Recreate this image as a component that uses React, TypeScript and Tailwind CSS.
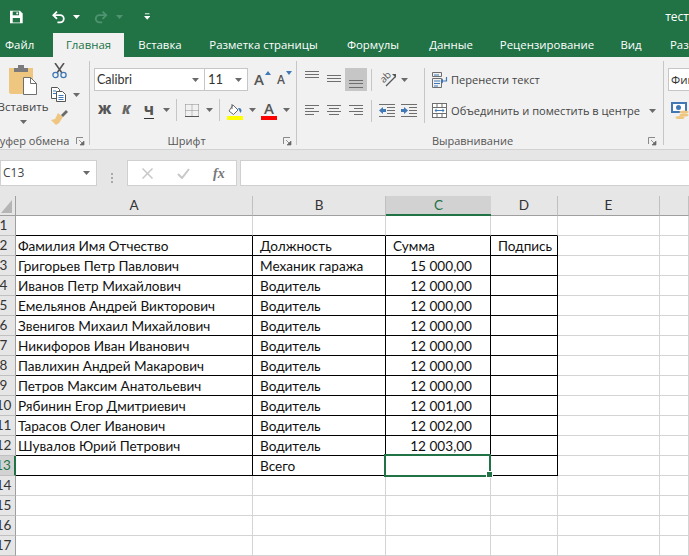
const ui = "font-['Open_Sans',sans-serif]";
const cellFont = "font-['Lato','Noto_Sans',sans-serif]";

function Caret() {
  return (
    <svg width="7" height="4" viewBox="0 0 7 4" className="shrink-0">
      <path d="M0 0h7L3.500 4z" fill="#6a6a6a" />
    </svg>
  );
}

function TitleCaret({ dim = false }: { dim?: boolean }) {
  return (
    <svg width="7" height="4" viewBox="0 0 7 4" className="shrink-0">
      <path d="M0 0h7L3.500 4z" fill={dim ? "#4f9470" : "#fff"} />
    </svg>
  );
}

function Launcher() {
  return (
    <svg width="9" height="9" viewBox="0 0 9 9" className="shrink-0">
      <path d="M0.500 7V0.500H7" fill="none" stroke="#8a8a8a" />
      <path d="M3 3l4 4M8 4v4H4z" fill="#6a6a6a" stroke="#6a6a6a" strokeWidth="0.7" />
    </svg>
  );
}

function Lines({ rows }: { rows: [number, number, number][] }) {
  return (
    <svg width="22" height="23" viewBox="0 0 22 23">
      {rows.map(([x1, x2, y]) => (
        <rect key={`${x1}-${y}`} x={x1} y={y} width={x2 - x1} height="1" fill="#6e6e6e" />
      ))}
    </svg>
  );
}

function Paste() {
  return (
    <svg width="28" height="31" viewBox="0 0 28 31">
      <path d="M0 4h24v26H1.500L0 28.500z" fill="#efc67f" />
      <path d="M5 4h4V1h6v3h4v4H5z" fill="#7b7b7b" />
      <path d="M14.500 13.500h7l6 6v11h-13z" fill="#fff" stroke="#6f6f6f" />
      <path d="M21.500 13.500v6h6" fill="none" stroke="#6f6f6f" />
    </svg>
  );
}

function Cut() {
  return (
    <svg width="15" height="16" viewBox="0 0 15 16">
      <path d="M3 0l7 10M12 0L5 10" stroke="#555" strokeWidth="1.600" fill="none" />
      <circle cx="3.500" cy="12" r="2.600" fill="none" stroke="#3f78b5" strokeWidth="1.300" />
      <circle cx="11.500" cy="12" r="2.600" fill="none" stroke="#3f78b5" strokeWidth="1.300" />
    </svg>
  );
}

function Copy() {
  return (
    <svg width="15" height="15" viewBox="0 0 15 15">
      <path d="M.500.500h6l2 2v9h-8z" fill="#fff" stroke="#555" />
      <path d="M5.500 4.500h6l3 3v7h-9z" fill="#fff" stroke="#555" />
      <path d="M2 4h3M2 6.500h3M7.500 8.500h5M7.500 10.500h5M7.500 12.500h5" stroke="#3f78b5" />
    </svg>
  );
}

function Painter() {
  return (
    <svg width="17" height="15" viewBox="0 0 17 15">
      <path d="M7 3l5 4-4 6-3 2-5-5 4-1z" fill="#efc67f" />
      <path d="M10 5l5-5 2 2-5 5z" fill="#6a6a6a" />
    </svg>
  );
}

function Borders() {
  return (
    <svg width="14" height="13" viewBox="0 0 14 13">
      <path d="M.500.500h13M.500 6.500h13M.500.500v12M7 .500v12M13.500.500v12" stroke="#8a8a8a" strokeDasharray="1 1" fill="none" />
      <rect x="0" y="12" width="14" height="1" fill="#555" />
    </svg>
  );
}

function Fill() {
  return (
    <svg width="16" height="16" viewBox="0 0 16 16">
      <path d="M6 1l5 5-4.500 4.500L2 7z" fill="#fff" stroke="#6a6a6a" />
      <path d="M5 0v5" stroke="#6a6a6a" />
      <path d="M11 4c2-.5 3.500.5 3.500 3l-1 2-1-2z" fill="#3f78b5" />
      <rect x="0" y="12" width="16" height="4" fill="#ffff00" />
    </svg>
  );
}

function Orientation() {
  return (
    <svg width="17" height="17" viewBox="0 0 17 17">
      <text x="5.500" y="9" transform="rotate(-45 6 6)" textAnchor="middle" fontSize="10" fill="#555" fontFamily="Open Sans, sans-serif">ab</text>
      <path d="M6 15L15 6" stroke="#555" strokeWidth="1.200" />
      <path d="M12 3h4v4z" fill="#555" />
    </svg>
  );
}

function Indent({ flip = false }: { flip?: boolean }) {
  return (
    <svg width="16" height="13" viewBox="0 0 16 13">
      <path d="M0 .500h16M8 3.500h8M8 6.500h8M8 9.500h8M0 12.500h16" stroke="#6e6e6e" />
      {flip ? (
        <path d="M0 5h3V3l4 3.500-4 3.500V8H0z" fill="#3f78b5" />
      ) : (
        <path d="M7 5H4V3L0 6.500 4 10V8h3z" fill="#3f78b5" />
      )}
    </svg>
  );
}

function Wrap() {
  return (
    <svg width="16" height="16" viewBox="0 0 16 16">
      <path d="M.500.500h9v4h-9zM.500 6.500h9v9h-9z" fill="none" stroke="#6e6e6e" />
      <path d="M2 3h5M2 9h6M2 11.500h6M2 14h4" stroke="#3f78b5" />
      <path d="M14.500 5v4h-4" fill="none" stroke="#3f78b5" strokeWidth="1.200" />
      <path d="M11 6.500v5L8.500 9z" fill="#3f78b5" />
    </svg>
  );
}

function Merge() {
  return (
    <svg width="15" height="15" viewBox="0 0 15 15">
      <rect x=".5" y=".5" width="14" height="14" fill="#fff" stroke="#6e6e6e" />
      <path d="M.500 4.500h14M.500 10.500h14M5 .500v4M10 .500v4M5 10.500v4M10 10.500v4" stroke="#6e6e6e" />
      <path d="M3 7.500h9" stroke="#3f78b5" />
      <path d="M4.500 5.500v4L2.500 7.500zM10.500 5.500v4l2-2z" fill="#3f78b5" />
    </svg>
  );
}

function Currency() {
  return (
    <svg width="18" height="17" viewBox="0 0 18 17">
      <rect x="1" y="1" width="14" height="9" fill="#fff" stroke="#3f78b5" strokeWidth="2" />
      <circle cx="7.500" cy="5.500" r="2.500" fill="#3f78b5" />
      <ellipse cx="13" cy="10" rx="4.500" ry="1.500" fill="#efc67f" />
      <ellipse cx="13" cy="13" rx="4.500" ry="1.500" fill="#efc67f" />
      <ellipse cx="9" cy="15.500" rx="4.500" ry="1.500" fill="#efc67f" />
    </svg>
  );
}

function ClipboardGroup() {
  return (
    <div className="flex flex-col w-[89px] shrink-0">
      <div className="flex h-[76px]">
        <div className="flex flex-col items-center w-[46px] pt-[7px]">
          <Paste />
          <span className="text-[11.500px] leading-[16px] mt-[4px] text-[#444]">Вставить</span>
          <span className="mt-[5px]"><Caret /></span>
        </div>
        <div className="flex flex-col pl-[5px] pt-[6px]">
          <div className="h-[23px] pl-px"><Cut /></div>
          <div className="h-[24px] flex items-start gap-[7px] pt-[1px]">
            <Copy />
            <span className="mt-[6px]"><Caret /></span>
          </div>
          <div><Painter /></div>
        </div>
      </div>
      <div className="flex items-center justify-between h-[16px] pr-[4px]">
        <span className="text-[11px] text-[#555] -ml-[7px] whitespace-nowrap">Буфер обмена</span>
        <Launcher />
      </div>
    </div>
  );
}

function FontGroup() {
  return (
    <div className="flex flex-col w-[206px] shrink-0">
      <div className="flex flex-col h-[76px] pt-[11px] pl-[4px]">
        <div className="flex items-center h-[23px]">
          <div className="flex items-center justify-between w-[111px] h-full bg-white border border-[#c6c6c6] pl-[2px] pr-[5px]">
            <span className={`${cellFont} text-[12.500px] text-[#333] pt-px`}>Calibri</span>
            <Caret />
          </div>
          <div className="flex items-center justify-between w-[44px] -ml-px h-full bg-white border border-[#c6c6c6] pl-[3px] pr-[5px]">
            <span className={`${cellFont} text-[13px] text-[#333] pt-px`}>11</span>
            <Caret />
          </div>
          <div className="relative ml-[6px] w-[14px] text-[15px] font-semibold leading-none text-[#555]">
            A
            <svg width="6" height="4" viewBox="0 0 6 4" className="absolute right-[-3px] top-[-1px]">
              <path d="M0 4l3-4 3 4z" fill="#3f78b5" />
            </svg>
          </div>
          <div className="relative ml-[9px] w-[12px] text-[12px] font-semibold leading-none text-[#555]">
            A
            <svg width="6" height="4" viewBox="0 0 6 4" className="absolute right-[-3px] top-[-3px]">
              <path d="M0 0l3 4 3-4z" fill="#3f78b5" />
            </svg>
          </div>
        </div>
        <div className="flex items-center h-[24px] mt-[7px] text-[#555]">
          <span className="ml-[4px] w-[24px] text-[13px] font-extrabold">Ж</span>
          <span className="w-[22px] text-[13px] font-extrabold italic text-[#666]">К</span>
          <span className="w-[10px] text-[13px] font-extrabold border-b border-[#333] leading-[16px]">Ч</span>
          <span className="ml-[9px]"><Caret /></span>
          <span className="ml-[6px] w-px h-[22px] bg-[#c6c6c6]" />
          <span className="ml-[8px]"><Borders /></span>
          <span className="ml-[7px]"><Caret /></span>
          <span className="ml-[6px] w-px h-[22px] bg-[#c6c6c6]" />
          <span className="ml-[7px] pt-[3px]"><Fill /></span>
          <span className="ml-[6px]"><Caret /></span>
          <div className="ml-[5px] flex flex-col items-center w-[16px]">
            <span className="text-[15px] leading-[15px] font-semibold">A</span>
            <span className="w-[16px] h-[4px] bg-[#ff0000]" />
          </div>
          <span className="ml-[6px]"><Caret /></span>
        </div>
      </div>
      <div className="flex items-center h-[16px] pr-[4px]">
        <span className="flex-1 text-center text-[11px] text-[#555]">Шрифт</span>
        <Launcher />
      </div>
    </div>
  );
}

function AlignGroup() {
  return (
    <div className="flex flex-col w-[366px] shrink-0">
      <div className="flex h-[76px] pt-[11px] pl-[4px]">
        <div className="flex flex-col">
          <div className="flex h-[23px]">
            <Lines rows={[[4, 18, 3], [4, 18, 6], [4, 18, 9]]} />
            <Lines rows={[[4, 18, 7], [4, 18, 10], [4, 18, 13]]} />
            <div className="bg-[#c6c6c6]">
              <Lines rows={[[4, 18, 12], [4, 18, 15], [4, 18, 19]]} />
            </div>
          </div>
          <div className="flex h-[23px] mt-[8px]">
            <Lines rows={[[4, 18, 6], [4, 13, 9], [4, 18, 12], [4, 13, 15]]} />
            <Lines rows={[[4, 18, 6], [6, 16, 9], [4, 18, 12], [6, 16, 15]]} />
            <Lines rows={[[4, 18, 6], [9, 18, 9], [4, 18, 12], [9, 18, 15]]} />
          </div>
        </div>
        <div className="flex flex-col ml-[4px] w-[46px]">
          <div className="flex items-center h-[23px]">
            <span className="w-px h-[22px] bg-[#c6c6c6]" />
            <span className="ml-[8px]"><Orientation /></span>
            <span className="ml-[4px]"><Caret /></span>
          </div>
          <div className="flex items-center h-[23px] mt-[8px]">
            <span className="w-px h-[22px] bg-[#c6c6c6]" />
            <span className="ml-[7px]"><Indent /></span>
            <span className="ml-[6px]"><Indent flip /></span>
          </div>
        </div>
        <span className="ml-[7px] w-px h-[55px] bg-[#c6c6c6]" />
        <div className="flex flex-col ml-[7px] text-[11.100px] text-[#444]">
          <div className="flex items-center gap-[3px] h-[23px]">
            <Wrap />
            <span className="whitespace-nowrap pt-px">Перенести текст</span>
          </div>
          <div className="flex items-center gap-[4px] h-[23px] mt-[8px]">
            <Merge />
            <span className="whitespace-nowrap pt-px">Объединить и поместить в центре</span>
            <span className="ml-[5px]"><Caret /></span>
          </div>
        </div>
      </div>
      <div className="flex items-center h-[16px] pr-[4px]">
        <span className="w-[351px] text-center text-[11px] text-[#555]">Выравнивание</span>
        <Launcher />
      </div>
    </div>
  );
}

function NumberGroup() {
  return (
    <div className="flex flex-col pt-[11px] pl-[4px] flex-1">
      <div className="flex items-center h-[23px] bg-white border border-r-0 border-[#c6c6c6] pl-[2px] text-[11.500px] text-[#333] overflow-hidden whitespace-nowrap">
        Финансовый
      </div>
      <div className="mt-[11px] pl-[3px]"><Currency /></div>
    </div>
  );
}

function Separator() {
  return <div className="w-px h-[84px] mt-[4px] bg-[#c6c6c6] shrink-0" />;
}

function Ribbon() {
  return (
    <div className="flex h-[93px] bg-[#f1f1f1] border-b border-[#d2d2d2]">
      <ClipboardGroup />
      <Separator />
      <FontGroup />
      <Separator />
      <AlignGroup />
      <Separator />
      <NumberGroup />
    </div>
  );
}

const tabs: [string, string][] = [
  ["Вставка", "w-[72px]"],
  ["Разметка страницы", "w-[135px]"],
  ["Формулы", "w-[84px]"],
  ["Данные", "w-[72px]"],
  ["Рецензирование", "w-[120px]"],
  ["Вид", "w-[48px]"],
];

function TitleBar() {
  return (
    <div className="bg-[#217346] text-white">
      <div className="flex items-center h-[33px]">
        <svg width="14" height="14" viewBox="0 0 14 14" className="ml-[10px]">
          <path d="M0 0h11l3 3v11H0z" fill="#fff" />
          <path d="M3 1h7v4H3zM3 8h8v5H3z" fill="#217346" />
          <rect x="7" y="2" width="2" height="2" fill="#fff" />
        </svg>
        <svg width="15" height="14" viewBox="0 0 15 14" className="ml-[29px]">
          <path d="M1.500 5H9a4 4 0 0 1 0 8H6" fill="none" stroke="#fff" strokeWidth="2" />
          <path d="M5.500 1l-4 4 4 4" fill="none" stroke="#fff" strokeWidth="2" />
        </svg>
        <span className="ml-[8px]"><TitleCaret /></span>
        <svg width="15" height="14" viewBox="0 0 15 14" className="ml-[14px]">
          <path d="M13.500 5H6a4 4 0 0 0 0 8h3" fill="none" stroke="#4f9470" strokeWidth="2" />
          <path d="M9.500 1l4 4-4 4" fill="none" stroke="#4f9470" strokeWidth="2" />
        </svg>
        <span className="ml-[8px]"><TitleCaret dim /></span>
        <svg width="7" height="7" viewBox="0 0 7 7" className="ml-[21px]">
          <path d="M1 .500h5" stroke="#fff" />
          <path d="M0 3h7L3.500 7z" fill="#fff" />
        </svg>
        <span className="ml-[515px] text-[12px] whitespace-nowrap">тест</span>
      </div>
      <div className="flex h-[24px] text-[11.400px] leading-[24px] whitespace-nowrap">
        <span className="w-[53px] shrink-0 pl-[5px]">Файл</span>
        <span className="w-[71px] shrink-0 text-center bg-[#f1f1f1] text-[#217346]">Главная</span>
        {tabs.map(([label, width]) => (
          <span key={label} className={`${width} shrink-0 text-center`}>{label}</span>
        ))}
        <span className="shrink-0 pl-[15px]">Разработчик</span>
      </div>
    </div>
  );
}

function FormulaBar() {
  return (
    <div className="flex h-[46px] pt-[10px] bg-[#e6e6e6]">
      <div className="flex items-center justify-between w-[97px] h-[26px] bg-white border border-[#d0d0d0] pl-[2px] pr-[6px]">
        <span className="text-[12px] text-[#444]">C13</span>
        <Caret />
      </div>
      <div className="flex flex-col justify-center gap-[2px] w-[30px] items-center">
        <span className="w-[2px] h-[2px] bg-[#aaa]" />
        <span className="w-[2px] h-[2px] bg-[#aaa]" />
        <span className="w-[2px] h-[2px] bg-[#aaa]" />
      </div>
      <div className="flex items-center w-[110px] h-[26px] bg-white border border-[#d0d0d0]">
        <svg width="11" height="11" viewBox="0 0 11 11" className="ml-[14px]">
          <path d="M.500.500l10 10M10.500.500l-10 10" stroke="#c8c8c8" strokeWidth="1.500" />
        </svg>
        <svg width="13" height="11" viewBox="0 0 13 11" className="ml-[24px]">
          <path d="M1 6l4 4 7-9" fill="none" stroke="#c8c8c8" strokeWidth="2" />
        </svg>
        <span className="ml-[23px] font-['Liberation_Serif',serif] italic font-bold text-[14px] text-[#777]">fx</span>
      </div>
      <div className="flex-1 ml-[3px] h-[26px] bg-white border-y border-l border-[#d0d0d0]" />
    </div>
  );
}

type Row = [string, string, string];

const people: Row[] = [
  ["Григорьев Петр Павлович", "Механик гаража", "15 000,00"],
  ["Иванов Петр Михайлович", "Водитель", "12 000,00"],
  ["Емельянов Андрей Викторович", "Водитель", "12 000,00"],
  ["Звенигов Михаил Михайлович", "Водитель", "12 000,00"],
  ["Никифоров Иван Иванович", "Водитель", "12 000,00"],
  ["Павлихин Андрей Макарович", "Водитель", "12 000,00"],
  ["Петров Максим Анатольевич", "Водитель", "12 000,00"],
  ["Рябинин Егор Дмитриевич", "Водитель", "12 001,00"],
  ["Тарасов Олег Иванович", "Водитель", "12 002,00"],
  ["Шувалов Юрий Петрович", "Водитель", "12 003,00"],
];

const grey = "border-r border-b border-[#d4d4d4]";
const boxed = "border-r border-b border-black";
const topRowCell = "border-r border-[#d4d4d4] border-b border-b-black";
const body = "flex items-center pt-px overflow-hidden whitespace-nowrap";

function RowHead({ n, active = false }: { n: number; active?: boolean }) {
  return (
    <div
      className={`flex items-center text-[13.500px] border-b ${
        active
          ? "bg-[#d2d2d2] text-[#217346] border-b-[#c0c0c0] border-r-2 border-r-[#217346]"
          : "bg-[#e6e6e6] text-[#333] border-b-[#c0c0c0] border-r border-r-[#9f9f9f]"
      }`}
    >
      <span className="-ml-[8px] w-[23px] text-center">{n}</span>
    </div>
  );
}

function ColHead({ label, active = false }: { label: string; active?: boolean }) {
  return (
    <div
      className={`flex items-center justify-center text-[13.500px] border-b ${
        active
          ? "bg-[#d2d2d2] text-[#217346] border-b-2 border-b-[#217346]"
          : "bg-[#e6e6e6] text-[#333] border-b-[#9f9f9f] border-r border-r-[#c0c0c0]"
      }`}
    >
      {label}
    </div>
  );
}

function BlankRow({ n }: { n: number }) {
  return (
    <>
      <RowHead n={n} />
      <div className={grey} />
      <div className={grey} />
      <div className={grey} />
      <div className={grey} />
      <div className={grey} />
      <div className={grey} />
    </>
  );
}

function Sheet() {
  return (
    <div className={`${cellFont} grid grid-cols-[16px_237px_133px_105px_67px_102px_1fr] auto-rows-[20px] text-[13.600px] text-[#111]`}>
      <div className="relative bg-[#e6e6e6] border-r border-b border-[#9f9f9f] overflow-hidden">
        <svg width="11" height="13" viewBox="0 0 11 13" className="absolute left-[1px] bottom-[2px]">
          <path d="M11 0v13H0z" fill="#b5b5b5" />
        </svg>
      </div>
      <ColHead label="A" />
      <ColHead label="B" />
      <ColHead label="C" active />
      <ColHead label="D" />
      <ColHead label="E" />
      <ColHead label="" />

      <RowHead n={1} />
      <div className={topRowCell} />
      <div className={topRowCell} />
      <div className={topRowCell} />
      <div className={topRowCell} />
      <div className={grey} />
      <div className={grey} />

      <RowHead n={2} />
      <div className={`${boxed} ${body} pl-[2px]`}>Фамилия Имя Отчество</div>
      <div className={`${boxed} ${body} pl-[7px]`}>Должность</div>
      <div className={`${boxed} ${body} pl-[7px]`}>Сумма</div>
      <div className={`${boxed} ${body} pl-[7px]`}>Подпись</div>
      <div className={grey} />
      <div className={grey} />

      {people.map(([name, job, sum], i) => (
        <div key={name} className="contents">
          <RowHead n={i + 3} />
          <div className={`${boxed} ${body} pl-[2px]`}>{name}</div>
          <div className={`${boxed} ${body} pl-[7px]`}>{job}</div>
          <div className={`${boxed} ${body} justify-end pr-[18px]`}>{sum}</div>
          <div className={boxed} />
          <div className={grey} />
          <div className={grey} />
        </div>
      ))}

      <RowHead n={13} active />
      <div className={boxed} />
      <div className={`${boxed} ${body} pl-[7px]`}>Всего</div>
      <div className={`${boxed} relative`}>
        <div className="absolute -left-[2px] -top-[2px] -right-px -bottom-[2px] border-2 border-[#217346]" />
        <div className="absolute -right-[3px] -bottom-[3px] w-[5px] h-[5px] bg-[#217346] border border-white box-content" />
      </div>
      <div className={boxed} />
      <div className={grey} />
      <div className={grey} />

      <BlankRow n={14} />
      <BlankRow n={15} />
      <BlankRow n={16} />
      <BlankRow n={17} />
    </div>
  );
}

export default function App() {
  return (
    <div className={`${ui} w-[689px] h-[556px] overflow-hidden bg-white`}>
      <TitleBar />
      <Ribbon />
      <FormulaBar />
      <Sheet />
    </div>
  );
}
